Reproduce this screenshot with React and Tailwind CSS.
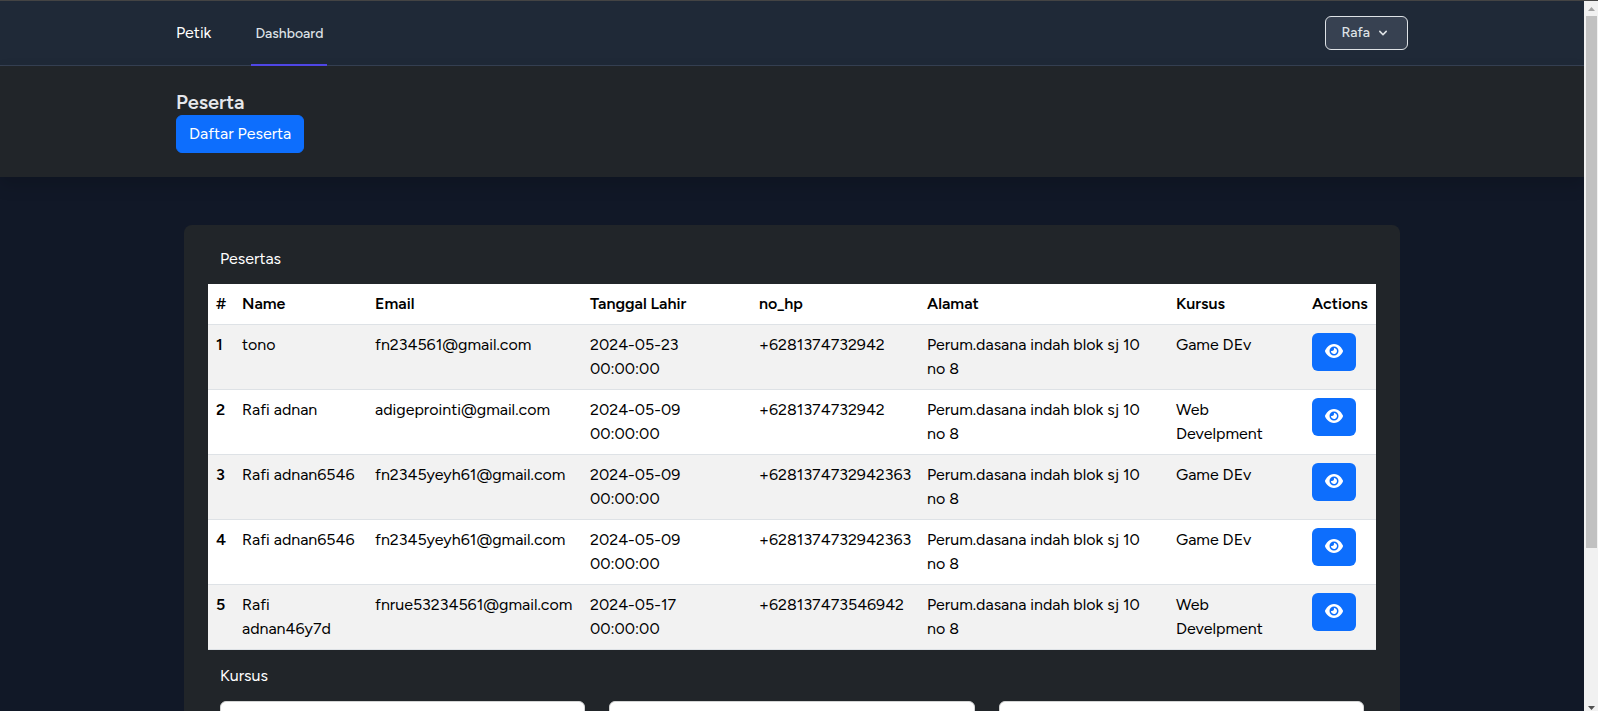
/**
 * Peserta — page du tableau de bord.
 */

import { FaEye } from 'react-icons/fa6';

const columns = [
  { label: '#', width: 'w-[26px]' },
  { label: 'Name', width: 'w-[133px]' },
  { label: 'Email', width: 'w-[215px]' },
  { label: 'Tanggal Lahir', width: 'w-[169px]' },
  { label: 'no_hp', width: 'w-[168px]' },
  { label: 'Alamat', width: 'w-[249px]' },
  { label: 'Kursus', width: 'w-[136px]' },
  { label: 'Actions', width: 'w-[72px]' },
];

const alamat = 'Perum.dasana indah blok sj 10 no 8';

const pesertas = [
  { id: 1, name: 'tono', email: 'fn234561@gmail.com', lahir: '2024-05-23 00:00:00', hp: '+6281374732942', alamat, kursus: 'Game DEv' },
  { id: 2, name: 'Rafi adnan', email: 'adigeprointi@gmail.com', lahir: '2024-05-09 00:00:00', hp: '+6281374732942', alamat, kursus: 'Web Develpment' },
  { id: 3, name: 'Rafi adnan6546', email: 'fn2345yeyh61@gmail.com', lahir: '2024-05-09 00:00:00', hp: '+6281374732942363', alamat, kursus: 'Game DEv' },
  { id: 4, name: 'Rafi adnan6546', email: 'fn2345yeyh61@gmail.com', lahir: '2024-05-09 00:00:00', hp: '+6281374732942363', alamat, kursus: 'Game DEv' },
  { id: 5, name: 'Rafi adnan46y7d', email: 'fnrue53234561@gmail.com', lahir: '2024-05-17 00:00:00', hp: '+628137473546942', alamat, kursus: 'Web Develpment' },
];

/**
 * Barre de navigation.
 */
const Navbar = () => (
  <nav className="border-t border-b border-t-[#444444] border-b-gray-700 bg-[#1f2937]">
    <div className="max-w-7xl mx-auto px-6 h-16 flex items-center justify-between">
      <div className="flex items-center self-stretch gap-10">
        <a href="#petik" className="text-white">Petik</a>
        <a
          href="#dashboard"
          className="-mb-px self-stretch flex items-center px-1 pt-0.5 border-b-2 border-[#4f46e5] text-sm font-medium text-[#dee2e6]"
        >
          Dashboard
        </a>
      </div>
      <button
        type="button"
        className="h-[34px] px-4 flex items-center gap-[5px] rounded-md border border-[#dee2e6] bg-[#374151] text-sm font-medium text-[#dee2e6]"
      >
        Rafa
        <svg className="w-4 h-4" fill="currentColor" viewBox="0 0 20 20">
          <path fillRule="evenodd" clipRule="evenodd" d="M5.293 7.293a1 1 0 011.414 0L10 10.586l3.293-3.293a1 1 0 111.414 1.414l-4 4a1 1 0 01-1.414 0l-4-4a1 1 0 010-1.414z" />
        </svg>
      </button>
    </div>
  </nav>
);

/**
 * Tableau des participants.
 */
const PesertaTable = () => (
  <table className="w-full table-fixed bg-white text-black">
    <thead>
      <tr className="border-b border-[#dee2e6]">
        {columns.map((column) => (
          <th key={column.label} scope="col" className={`${column.width} p-2 text-left font-semibold whitespace-nowrap`}>
            {column.label}
          </th>
        ))}
      </tr>
    </thead>
    <tbody>
      {pesertas.map((peserta) => (
        <tr key={peserta.id} className="border-b border-[#dee2e6] odd:bg-[#f2f2f2] align-top">
          <th scope="row" className="p-2 text-left font-semibold">{peserta.id}</th>
          <td className="p-2">{peserta.name}</td>
          <td className="p-2">{peserta.email}</td>
          <td className="p-2 pr-16">{peserta.lahir}</td>
          <td className="p-2">{peserta.hp}</td>
          <td className="p-2">{peserta.alamat}</td>
          <td className="p-2 pr-6">{peserta.kursus}</td>
          <td className="p-2">
            <button
              type="button"
              aria-label={`Lihat ${peserta.name}`}
              className="w-11 h-[38px] pb-0.5 flex items-center justify-center rounded-md bg-[#0d6efd] text-white"
            >
              <FaEye size={18} />
            </button>
          </td>
        </tr>
      ))}
    </tbody>
  </table>
);

/**
 * Barre de défilement de la fenêtre.
 */
const Scrollbar = () => (
  <div className="w-3.5 shrink-0 flex flex-col border-t border-[#444444] bg-[#f1f1f1]">
    <svg className="w-3.5 h-[15px]" viewBox="0 0 14 15" fill="#a3a3a3">
      <path d="M4 10L7.500 6L11 10z" />
    </svg>
    <div className="flex-1">
      <div className="ml-0.5 mr-px h-[532px] bg-[#c1c1c1]" />
    </div>
    <svg className="w-3.5 h-[15px]" viewBox="0 0 14 15" fill="#505050">
      <path d="M4 10L7.500 14L11 10z" />
    </svg>
  </div>
);

const App = () => (
  <div className="h-screen flex overflow-hidden bg-[#111827] font-['Figtree','Lato',sans-serif] text-base">
    <div className="flex-1 min-w-0 overflow-hidden">
      <Navbar />

      <header className="bg-[#212529] shadow-[0_8px_16px_rgba(0,0,0,0.15)]">
        <div className="max-w-7xl mx-auto p-6">
          <h2 className="text-xl leading-tight font-semibold text-[#e5e7eb]">Peserta</h2>
          <button type="button" className="h-[38px] px-3 rounded-md border border-[#0d6efd] bg-[#0d6efd] text-white">
            Daftar Peserta
          </button>
        </div>
      </header>

      <main className="max-w-7xl mx-auto py-12 px-8">
        <div className="rounded-lg bg-[#212529] px-6 pt-[22px] pb-6 text-white">
          <h3 className="px-3 pb-[13px]">Pesertas</h3>
          <PesertaTable />
          <h3 className="px-3 pt-3.5 pb-[13px]">Kursus</h3>
          <div className="grid grid-cols-3 gap-6 px-3">
            <div className="h-48 rounded-md border border-[#d3d4d4] bg-white" />
            <div className="h-48 rounded-md border border-[#d3d4d4] bg-white" />
            <div className="h-48 rounded-md border border-[#d3d4d4] bg-white" />
          </div>
        </div>
      </main>
    </div>
    <Scrollbar />
  </div>
);

export default App;
